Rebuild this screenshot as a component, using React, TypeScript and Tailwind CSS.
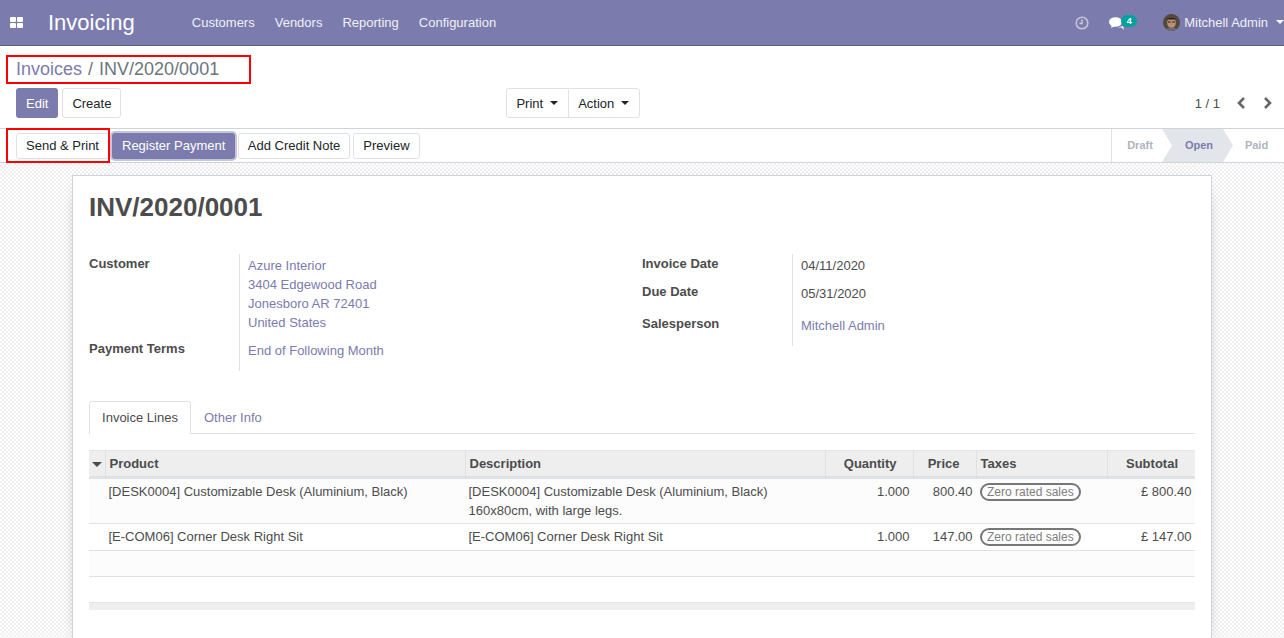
const navLinks = ['Customers', 'Vendors', 'Reporting', 'Configuration'];

const lines = [
  {
    product: '[DESK0004] Customizable Desk (Aluminium, Black)',
    description: ['[DESK0004] Customizable Desk (Aluminium, Black)', '160x80cm, with large legs.'],
    price: '800.40',
    subtotal: '£ 800.40',
  },
  {
    product: '[E-COM06] Corner Desk Right Sit',
    description: ['[E-COM06] Corner Desk Right Sit'],
    price: '147.00',
    subtotal: '£ 147.00',
  },
];

function Caret({ className = '' }: { className?: string }) {
  return <span className={`inline-block border-x-[4px] border-t-[4px] border-x-transparent ${className}`} />;
}

function Btn({ children, primary = false, className = 'h-[30px]' }: { children: string; primary?: boolean; className?: string }) {
  return (
    <button
      className={
        primary
          ? `px-[10px] pt-[1px] rounded-[3px] bg-[#7c7bad] text-white ${className}`
          : `px-[9px] pt-[1px] rounded-[3px] bg-white border border-[#dee2e6] text-[#212529] ${className}`
      }
    >
      {children}
    </button>
  );
}

function Field({ label, labelClass = '', children }: { label: string; labelClass?: string; children: React.ReactNode }) {
  return (
    <div className="flex">
      <div className={`w-[150px] shrink-0 font-bold text-[#4c4c4c] leading-[19px] ${labelClass}`}>{label}</div>
      <div className="flex-1 border-l border-[#dee2e6] pl-[8px] leading-[19px]">{children}</div>
    </div>
  );
}

export default function App() {
  return (
    <div
      className="relative w-[1284px] h-[638px] overflow-hidden bg-white text-[13px] text-[#4c4c4c]"
      style={{ fontFamily: '"Liberation Sans", Arial, sans-serif' }}
    >
      {/* Navbar */}
      <nav className="h-[46px] flex items-center bg-[#7c7bad] border-b border-[#5f5e8a] text-white">
        <svg width="13" height="11" viewBox="0 0 13 11" className="ml-[10px]" fill="currentColor" aria-hidden>
          <rect x="0" y="0" width="6" height="5" rx="1" />
          <rect x="7" y="0" width="6" height="5" rx="1" />
          <rect x="0" y="6" width="6" height="5" rx="1" />
          <rect x="7" y="6" width="6" height="5" rx="1" />
        </svg>
        <span className="ml-[25px] text-[22px] leading-none">Invoicing</span>
        <div className="ml-[57px] flex gap-[20px] text-[#f0f0f6]">
          {navLinks.map((l) => (
            <span key={l}>{l}</span>
          ))}
        </div>
        <div className="ml-auto flex items-center">
          <svg width="14" height="14" viewBox="0 0 14 14" fill="none" stroke="#c3c3da" strokeWidth="1.6" aria-hidden>
            <circle cx="7" cy="7" r="5.8" />
            <path d="M7 3.5V7.4H4.5" />
          </svg>
          <div className="relative ml-[20px] w-[28px] h-[14px]">
            <svg width="16" height="14" viewBox="0 0 16 14" fill="white" className="absolute left-0 top-[1px]" aria-hidden>
              <ellipse cx="6.5" cy="5" rx="6.5" ry="4.8" />
              <path d="M3 8l-1 3 4-2zM9 10.500h3.500l2.500 2.500-1-4z" />
            </svg>
            <span className="absolute left-[12px] -top-[1px] w-[16px] h-[12px] rounded-full bg-[#00a09d] text-[9px] font-bold leading-[12px] text-center">
              4
            </span>
          </div>
          <svg width="17" height="17" viewBox="0 0 17 17" className="ml-[26px] -mt-[1px] rounded-full" aria-hidden>
            <rect width="17" height="17" fill="#54483f" />
            <ellipse cx="8.500" cy="8.500" rx="4.300" ry="5.500" fill="#b98f78" />
            <path d="M4 6c1-3.500 8-4 9 0l-1.500-.5h-6z" fill="#2a211c" />
            <path d="M5 8h2.800M9.200 8h2.800" stroke="#2a211c" strokeWidth="1" />
            <path d="M2 17c1-3 4-3.500 6.500-3.500s5.500.5 6.500 3.500z" fill="#6f6a70" />
          </svg>
          <span className="ml-[4px] text-[#f0f0f6]">Mitchell Admin</span>
          <Caret className="ml-[8px] -mt-[1px] border-t-white" />
        </div>
      </nav>

      {/* Control panel */}
      <div className="h-[83px] border-b border-[#ced4da] pl-[16px] pr-[11px]">
        <div className="pt-[10px] h-[42px] text-[18px] leading-[26px]">
          <span className="text-[#7c7bad]">Invoices</span>
          <span className="text-[#6c757d] ml-[6px]">/</span>
          <span className="text-[#6c757d] ml-[6px]">INV/2020/0001</span>
        </div>
        <div className="flex items-center">
          <div className="flex gap-[4px]">
            <Btn primary>Edit</Btn>
            <Btn>Create</Btn>
          </div>
          <div className="ml-[385px] flex h-[30px] pt-[1px] rounded-[3px] border border-[#dee2e6] text-[#212529]">
            <div className="flex items-center gap-[7px] pl-[9px] pr-[10px] border-r border-[#dee2e6]">
              Print <Caret className="-mt-[2px] border-t-[#212529]" />
            </div>
            <div className="flex items-center gap-[7px] px-[9px] pr-[10px]">
              Action <Caret className="-mt-[2px] border-t-[#212529]" />
            </div>
          </div>
          <div className="ml-auto flex items-center text-[#4c4c4c]">
            <span className="pt-[1px]">1 / 1</span>
            <svg width="10" height="12" viewBox="0 0 10 12" fill="none" stroke="#666" strokeWidth="2.600" className="ml-[16px]" aria-hidden>
              <path d="M8 1L3 6l5 5" />
            </svg>
            <svg width="10" height="12" viewBox="0 0 10 12" fill="none" stroke="#666" strokeWidth="2.600" className="ml-[17px]" aria-hidden>
              <path d="M2 1l5 5-5 5" />
            </svg>
          </div>
        </div>
      </div>

      {/* Status bar */}
      <div className="h-[34px] flex items-center border-b border-[#ced4da] pl-[16px]">
        <div className="flex items-center gap-[3px]">
          <Btn className="h-[26px]">Send & Print</Btn>
          <button className="h-[26px] px-[10px] pt-[1px] rounded-[3px] bg-[#7c7bad] text-white ring-2 ring-[#c5c5db]">
            Register Payment
          </button>
          <Btn className="h-[26px] -ml-[0.5px]">Add Credit Note</Btn>
          <Btn className="h-[26px]">Preview</Btn>
        </div>
        <div className="ml-auto flex h-full text-[11px] font-bold border-l border-[#dee2e6]">
          <div className="w-[50px] flex items-center justify-center text-[#adb5bd] pl-[6px]">Draft</div>
          <div className="w-[71px] -mr-[10px] flex items-center justify-center pl-[3px] bg-[#e2e6ea] text-[#7c7bad] [clip-path:polygon(0_0,61px_0,100%_50%,61px_100%,0_100%,10px_50%)]">
            Open
          </div>
          <div className="w-[61px] flex items-center justify-center pl-[6px] text-[#adb5bd]">Paid</div>
        </div>
      </div>

      {/* Sheet */}
      <div className="h-[475px] pt-[12px] px-[72px] bg-[repeating-conic-gradient(#efefef_0_25%,#ffffff_0_50%)] bg-[length:4px_4px]">
        <div className="h-[470px] bg-white border border-[#ced4da] shadow-[0_5px_20px_-15px_#000] pt-[16px] px-[16px]">
          <h1 className="text-[26px] leading-[30px] font-bold text-[#4c4c4c]">INV/2020/0001</h1>

          <div className="mt-[32px] flex">
            <div className="w-[553px]">
              <Field label="Customer">
                <div className="pt-[2px] text-[#7c7bad]">
                  <div>Azure Interior</div>
                  <div>3404 Edgewood Road</div>
                  <div>Jonesboro AR 72401</div>
                  <div>United States</div>
                </div>
              </Field>
              <Field label="Payment Terms" labelClass="pt-[7px]">
                <div className="pt-[9px] pb-[11px] text-[#7c7bad]">End of Following Month</div>
              </Field>
            </div>
            <div className="flex-1">
              <Field label="Invoice Date">
                <div className="pt-[2px] pb-[3px] text-[#4c4c4c]">04/11/2020</div>
              </Field>
              <Field label="Due Date" labelClass="pt-[4px]">
                <div className="pt-[6px] pb-[3px] text-[#4c4c4c]">05/31/2020</div>
              </Field>
              <Field label="Salesperson" labelClass="pt-[8px]">
                <div className="pt-[10px] pb-[11px] text-[#7c7bad]">Mitchell Admin</div>
              </Field>
            </div>
          </div>

          {/* Tabs */}
          <div className="mt-[30px] flex h-[33px] border-b border-[#dee2e6]">
            <div className="w-[102px] h-[33px] flex items-center justify-center rounded-t-[3px] border border-b-0 border-[#dee2e6] bg-white text-[#4c4c4c]">
              Invoice Lines
            </div>
            <div className="ml-[13px] pt-[1px] flex items-center text-[#7c7bad]">Other Info</div>
          </div>

          {/* Lines */}
          <table className="mt-[16px] w-[1106px] table-fixed border-collapse">
            <colgroup>
              <col className="w-[16px]" />
              <col className="w-[360px]" />
              <col className="w-[360px]" />
              <col className="w-[88px]" />
              <col className="w-[63px]" />
              <col className="w-[131px]" />
              <col className="w-[88px]" />
            </colgroup>
            <thead>
              <tr className="h-[27px] bg-[#eeeeee] border-t border-[#e4e4e4] border-b-[3px] border-b-[#dee2e6] font-bold text-[#4c4c4c]">
                <th className="border-r border-[#dee2e6] text-center">
                  <Caret className="ml-[1px] align-middle border-x-[5px] border-t-[5px] border-t-[#4c4c4c]" />
                </th>
                <th className="border-r border-[#dee2e6] text-left pl-[4px]">Product</th>
                <th className="border-r border-[#dee2e6] text-left pl-[4px]">Description</th>
                <th className="border-r border-[#dee2e6] text-right pr-[16px]">Quantity</th>
                <th className="border-r border-[#dee2e6] text-right pr-[16px]">Price</th>
                <th className="border-r border-[#dee2e6] text-left pl-[4px]">Taxes</th>
                <th className="text-right pr-[17px]">Subtotal</th>
              </tr>
            </thead>
            <tbody>
              {lines.map((line, i) => (
                <tr key={line.product} className={`border-b border-[#dee2e6] align-top leading-[19px] ${i === 0 ? 'bg-[#fcfcfc]' : 'h-[27px] bg-white'}`}>
                  <td />
                  <td className="pl-[3.5px] pt-[3px] pb-[3px]">{line.product}</td>
                  <td className="pl-[3.5px] pt-[3px] pb-[3px]">
                    {line.description.map((d) => (
                      <div key={d}>{d}</div>
                    ))}
                  </td>
                  <td className="text-right pr-[3.5px] pt-[3px]">1.000</td>
                  <td className="text-right pr-[3.5px] pt-[3px]">{line.price}</td>
                  <td className="pl-[4px] pt-[4px]">
                    <span className="inline-block h-[18px] px-[5px] rounded-full border-2 border-[#777777] text-[12px] leading-[14px] text-[#808080] align-top">
                      Zero rated sales
                    </span>
                  </td>
                  <td className="text-right pr-[3.5px] pt-[3px]">{line.subtotal}</td>
                </tr>
              ))}
              <tr className="h-[26px] bg-[#fcfcfc] border-b border-[#dee2e6]">
                <td colSpan={7} />
              </tr>
              <tr className="h-[26px] bg-white">
                <td colSpan={7} />
              </tr>
            </tbody>
            <tfoot>
              <tr className="h-[7px] bg-[#eeeeee] border-t border-[#e4e4e4]">
                <td colSpan={7} />
              </tr>
            </tfoot>
          </table>
        </div>
      </div>

      {/* Red annotation boxes */}
      <div className="absolute left-[6px] top-[55px] w-[245px] h-[29px] border-2 border-[#ff0000]" />
      <div className="absolute left-[6px] top-[128px] w-[104px] h-[35px] border-2 border-[#ff0000]" />
    </div>
  );
}
